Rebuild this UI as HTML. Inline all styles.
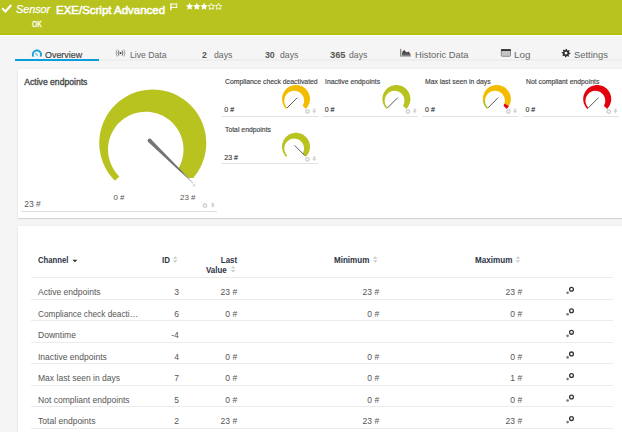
<!DOCTYPE html>
<html><head><meta charset="utf-8"><style>
html,body{margin:0;padding:0;}
body{width:622px;height:432px;overflow:hidden;position:relative;background:#f5f5f5;font-family:"Liberation Sans", sans-serif;}
</style></head><body>
<div style="position:absolute;left:0;top:0;width:622px;height:33px;background:#b9c31f"></div>
<div style="position:absolute;left:0;top:33px;width:622px;height:2px;background:#b4c012"></div>
<div style="position:absolute;left:0;top:35px;width:622px;height:1px;background:#fcfcfc"></div>
<svg style="position:absolute;left:0;top:0" width="622" height="35"><path d="M2.2,8.3 L5.5,11.5 L11.2,5" fill="none" stroke="#fff" stroke-width="2.1"/><path d="M170.9,3.3 V10.3" fill="none" stroke="#fff" stroke-width="1.3"/><path d="M171,4 H177.2 L176.2,5.8 L177.2,7.4 H171" fill="none" stroke="#fff" stroke-width="1"/><path d="M189.60,2.80 L190.72,5.06 L193.21,5.43 L191.41,7.19 L191.83,9.67 L189.60,8.50 L187.37,9.67 L187.79,7.19 L185.99,5.43 L188.48,5.06Z" fill="#fff"/><path d="M196.85,2.80 L197.97,5.06 L200.46,5.43 L198.66,7.19 L199.08,9.67 L196.85,8.50 L194.62,9.67 L195.04,7.19 L193.24,5.43 L195.73,5.06Z" fill="#fff"/><path d="M204.10,2.80 L205.22,5.06 L207.71,5.43 L205.91,7.19 L206.33,9.67 L204.10,8.50 L201.87,9.67 L202.29,7.19 L200.49,5.43 L202.98,5.06Z" fill="#fff"/><path d="M211.35,3.40 L212.32,5.37 L214.49,5.68 L212.92,7.21 L213.29,9.37 L211.35,8.35 L209.41,9.37 L209.78,7.21 L208.21,5.68 L210.38,5.37Z" fill="none" stroke="#fff" stroke-width="0.9"/><path d="M218.60,3.40 L219.57,5.37 L221.74,5.68 L220.17,7.21 L220.54,9.37 L218.60,8.35 L216.66,9.37 L217.03,7.21 L215.46,5.68 L217.63,5.37Z" fill="none" stroke="#fff" stroke-width="0.9"/></svg>
<div style="position:absolute;left:16.2px;top:4.25px;font-size:11.4px;line-height:11.4px;color:#fff;font-weight:400;font-style:italic;white-space:nowrap;transform:scaleX(0.947);transform-origin:0 0;-webkit-text-stroke:0.25px #fff;">Sensor</div>
<div style="position:absolute;left:56.4px;top:4.08px;font-size:11.6px;line-height:11.6px;color:#fff;font-weight:400;font-style:normal;white-space:nowrap;transform:scaleX(0.99);transform-origin:0 0;-webkit-text-stroke:0.55px #fff;">EXE/Script Advanced</div>
<div style="position:absolute;left:31.8px;top:20.09px;font-size:8.4px;line-height:8.4px;color:#fcfcf0;font-weight:400;font-style:normal;white-space:nowrap;transform:scaleX(0.8);transform-origin:0 0;-webkit-text-stroke:0.4px #fcfcf0;">OK</div>
<div style="position:absolute;left:15px;top:59px;width:607px;height:2px;background:#eeeeee"></div>
<div style="position:absolute;left:15px;top:59px;width:84px;height:2px;background:#0c9edb"></div>
<div style="position:absolute;left:45.3px;top:49.90px;font-size:9.8px;line-height:9.8px;color:#444;font-weight:400;font-style:normal;white-space:nowrap;transform:scaleX(0.91);transform-origin:0 0;-webkit-text-stroke:0.2px #444;">Overview</div>
<div style="position:absolute;left:129.6px;top:49.90px;font-size:9.8px;line-height:9.8px;color:#666;font-weight:400;font-style:normal;white-space:nowrap;transform:scaleX(0.88);transform-origin:0 0;">Live Data</div>
<div style="position:absolute;left:202.2px;top:49.90px;font-size:9.8px;line-height:9.8px;color:#555;font-weight:700;font-style:normal;white-space:nowrap;transform:scaleX(0.88);transform-origin:0 0;">2</div>
<div style="position:absolute;left:214.1px;top:49.90px;font-size:9.8px;line-height:9.8px;color:#666;font-weight:400;font-style:normal;white-space:nowrap;transform:scaleX(0.887);transform-origin:0 0;">days</div>
<div style="position:absolute;left:265.3px;top:49.90px;font-size:9.8px;line-height:9.8px;color:#555;font-weight:700;font-style:normal;white-space:nowrap;transform:scaleX(0.89);transform-origin:0 0;">30</div>
<div style="position:absolute;left:280.0px;top:49.90px;font-size:9.8px;line-height:9.8px;color:#666;font-weight:400;font-style:normal;white-space:nowrap;transform:scaleX(0.887);transform-origin:0 0;">days</div>
<div style="position:absolute;left:330.2px;top:49.90px;font-size:9.8px;line-height:9.8px;color:#555;font-weight:700;font-style:normal;white-space:nowrap;transform:scaleX(0.947);transform-origin:0 0;">365</div>
<div style="position:absolute;left:349.0px;top:49.90px;font-size:9.8px;line-height:9.8px;color:#666;font-weight:400;font-style:normal;white-space:nowrap;transform:scaleX(0.887);transform-origin:0 0;">days</div>
<div style="position:absolute;left:415px;top:49.90px;font-size:9.8px;line-height:9.8px;color:#666;font-weight:400;font-style:normal;white-space:nowrap;transform:scaleX(0.954);transform-origin:0 0;">Historic Data</div>
<div style="position:absolute;left:514px;top:49.90px;font-size:9.8px;line-height:9.8px;color:#666;font-weight:400;font-style:normal;white-space:nowrap;">Log</div>
<div style="position:absolute;left:574px;top:49.90px;font-size:9.8px;line-height:9.8px;color:#666;font-weight:400;font-style:normal;white-space:nowrap;transform:scaleX(0.958);transform-origin:0 0;">Settings</div>
<svg style="position:absolute;left:0;top:0" width="622" height="62"><path d="M33.4,56.6 A4.1,4.1 0 1 1 40.5,56.6" fill="none" stroke="#0c9edb" stroke-width="1.7"/><path d="M35.4,53.2 L37.7,55.6" stroke="#5ab4e2" stroke-width="1.1"/><circle cx="120.5" cy="53.1" r="1.1" fill="#444"/><path d="M118.9,50.6 Q117.3,53.1 118.9,55.6 M122.1,50.6 Q123.7,53.1 122.1,55.6" fill="none" stroke="#666" stroke-width="0.95"/><path d="M117.2,49.6 Q114.9,53.1 117.2,56.6 M123.8,49.6 Q126.1,53.1 123.8,56.6" fill="none" stroke="#999" stroke-width="0.95"/><path d="M400.8,48.9 V56.7" stroke="#666" stroke-width="1"/><defs><linearGradient id="hg" x1="0" y1="0" x2="0" y2="1"><stop offset="0" stop-color="#333"/><stop offset="0.6" stop-color="#555"/><stop offset="1" stop-color="#aaa"/></linearGradient></defs><path d="M401.6,56.7 L402.3,52 L404.2,50 L406.5,52.6 L408.4,51.4 L410.2,53.6 L411,56.7 Z" fill="url(#hg)"/><rect x="501.3" y="49.5" width="9.2" height="6.8" rx="0.8" fill="#c4c4c4" stroke="#777" stroke-width="0.8"/><rect x="501" y="49.2" width="9.8" height="1.8" fill="#333"/><path d="M570.30,53.10 L570.22,53.94 L568.96,54.32 L568.66,54.88 L569.04,56.14 L568.39,56.68 L567.22,56.06 L566.62,56.24 L566.00,57.40 L565.16,57.32 L564.78,56.06 L564.22,55.76 L562.96,56.14 L562.42,55.49 L563.04,54.32 L562.86,53.72 L561.70,53.10 L561.78,52.26 L563.04,51.88 L563.34,51.32 L562.96,50.06 L563.61,49.52 L564.78,50.14 L565.38,49.96 L566.00,48.80 L566.84,48.88 L567.22,50.14 L567.78,50.44 L569.04,50.06 L569.58,50.71 L568.96,51.88 L569.14,52.48Z M567.40,53.10 A1.4,1.4 0 1 0 564.60,53.10 A1.4,1.4 0 1 0 567.40,53.10Z" fill="#333" fill-rule="evenodd"/></svg>
<div style="position:absolute;left:18px;top:69px;width:640px;height:149px;background:#fff;box-shadow:0 1px 1px rgba(0,0,0,0.11),0 0 3px rgba(0,0,0,0.06)"></div>
<div style="position:absolute;left:24.3px;top:77.92px;font-size:8.6px;line-height:8.6px;color:#4a4a4a;font-weight:400;font-style:normal;white-space:nowrap;-webkit-text-stroke:0.35px #4a4a4a;">Active endpoints</div>
<svg style="position:absolute;left:0;top:0" width="622" height="432"><defs><clipPath id="bgc"><path d="M0,0 H622 V177.9 H170 V432 H0Z"/></clipPath></defs><g clip-path="url(#bgc)"><path d="M114.92,180.83 L112.07,177.75 L109.47,174.45 L107.13,170.95 L105.08,167.29 L103.32,163.47 L101.87,159.53 L100.73,155.49 L99.91,151.37 L99.41,147.20 L99.25,143.00 L99.41,138.80 L99.91,134.63 L100.73,130.51 L101.87,126.47 L103.32,122.53 L105.08,118.71 L107.13,115.05 L109.47,111.55 L112.07,108.25 L114.92,105.17 L118.00,102.32 L121.30,99.72 L124.80,97.38 L128.46,95.33 L132.28,93.57 L136.22,92.12 L140.26,90.98 L144.38,90.16 L148.55,89.66 L152.75,89.50 L156.95,89.66 L161.12,90.16 L165.24,90.98 L169.28,92.12 L173.22,93.57 L177.04,95.33 L180.70,97.38 L184.20,99.72 L187.50,102.32 L190.58,105.17 L193.43,108.25 L196.03,111.55 L198.37,115.05 L200.42,118.71 L202.18,122.53 L203.63,126.47 L204.77,130.51 L205.59,134.63 L206.09,138.80 L206.25,143.00 L206.09,147.20 L205.59,151.37 L204.77,155.49 L203.63,159.53 L202.18,163.47 L200.42,167.29 L198.37,170.95 L196.03,174.45 L193.43,177.75 L190.58,180.83 L178.33,168.58 L179.70,166.02 L180.84,163.41 L181.78,160.79 L182.50,158.16 L183.02,155.54 L183.34,152.94 L183.49,150.38 L183.47,147.86 L183.28,145.40 L182.94,143.00 L182.45,140.66 L181.83,138.39 L181.08,136.20 L180.21,134.08 L179.22,132.04 L178.12,130.07 L176.91,128.19 L175.60,126.39 L174.20,124.68 L172.69,123.06 L171.09,121.52 L169.40,120.08 L167.62,118.73 L165.75,117.48 L163.79,116.34 L161.75,115.31 L159.62,114.39 L157.41,113.59 L155.12,112.93 L152.75,112.40 L150.31,112.03 L147.81,111.81 L145.25,111.75 L142.64,111.88 L139.99,112.19 L137.31,112.71 L134.63,113.43 L131.95,114.37 L129.29,115.53 L126.68,116.93 L124.13,118.56 L121.68,120.42 L119.34,122.53 L117.15,124.86 L115.13,127.42 L113.32,130.19 L111.73,133.15 L110.39,136.29 L109.33,139.58 L108.57,143.00 L108.12,146.51 L108.01,150.09 L108.24,153.69 L108.81,157.28 L109.74,160.82 L111.01,164.27 L112.62,167.59 L114.55,170.75 L116.79,173.71 L119.31,176.44Z" fill="#b9c31f"/></g><defs><linearGradient id="ng" gradientUnits="userSpaceOnUse" x1="149.6" y1="140.6" x2="193.0" y2="183.0"><stop offset="0" stop-color="#777"/><stop offset="0.72" stop-color="#6f6f6f"/><stop offset="1" stop-color="#c4c4c4"/></linearGradient></defs><path d="M148.20,142.03 L192.76,183.25 L193.24,182.75 L151.00,139.17Z" fill="url(#ng)"/><circle cx="149.6" cy="140.6" r="2.0" fill="#777"/><path d="M192.6,184 L195.6,186.6 M195.6,184 L192.6,186.6" stroke="#bbb" stroke-width="0.6"/></svg>
<div style="position:absolute;left:113.4px;top:193.73px;font-size:8px;line-height:8.0px;color:#555;font-weight:400;font-style:normal;white-space:nowrap;">0 #</div>
<div style="position:absolute;left:180px;top:193.73px;font-size:8px;line-height:8.0px;color:#555;font-weight:400;font-style:normal;white-space:nowrap;">23 #</div>
<div style="position:absolute;left:24.2px;top:200.00px;font-size:8.5px;line-height:8.5px;color:#555;font-weight:400;font-style:normal;white-space:nowrap;">23 #</div>
<div style="position:absolute;left:21px;top:211px;width:196px;height:1px;background:#ddd"></div>
<div style="position:absolute;left:224.6px;top:77.97px;font-size:7px;line-height:7.0px;color:#444;font-weight:400;font-style:normal;white-space:nowrap;transform:scaleX(0.976);transform-origin:0 0;-webkit-text-stroke:0.15px #444;">Compliance check deactivated</div>
<div style="position:absolute;left:224.3px;top:105.97px;font-size:7px;line-height:7.0px;color:#444;font-weight:400;font-style:normal;white-space:nowrap;-webkit-text-stroke:0.15px #444;">0 #</div>
<div style="position:absolute;left:221.5px;top:115.6px;width:96px;height:1px;background:#e2e2e2"></div>
<div style="position:absolute;left:325.0px;top:77.97px;font-size:7px;line-height:7.0px;color:#444;font-weight:400;font-style:normal;white-space:nowrap;transform:scaleX(0.976);transform-origin:0 0;-webkit-text-stroke:0.15px #444;">Inactive endpoints</div>
<div style="position:absolute;left:324.7px;top:105.97px;font-size:7px;line-height:7.0px;color:#444;font-weight:400;font-style:normal;white-space:nowrap;-webkit-text-stroke:0.15px #444;">0 #</div>
<div style="position:absolute;left:321.9px;top:115.6px;width:96px;height:1px;background:#e2e2e2"></div>
<div style="position:absolute;left:425.40000000000003px;top:77.97px;font-size:7px;line-height:7.0px;color:#444;font-weight:400;font-style:normal;white-space:nowrap;transform:scaleX(0.976);transform-origin:0 0;-webkit-text-stroke:0.15px #444;">Max last seen in days</div>
<div style="position:absolute;left:425.1px;top:105.97px;font-size:7px;line-height:7.0px;color:#444;font-weight:400;font-style:normal;white-space:nowrap;-webkit-text-stroke:0.15px #444;">0 #</div>
<div style="position:absolute;left:422.3px;top:115.6px;width:96px;height:1px;background:#e2e2e2"></div>
<div style="position:absolute;left:525.8000000000001px;top:77.97px;font-size:7px;line-height:7.0px;color:#444;font-weight:400;font-style:normal;white-space:nowrap;transform:scaleX(0.976);transform-origin:0 0;-webkit-text-stroke:0.15px #444;">Not compliant endpoints</div>
<div style="position:absolute;left:525.5px;top:105.97px;font-size:7px;line-height:7.0px;color:#444;font-weight:400;font-style:normal;white-space:nowrap;-webkit-text-stroke:0.15px #444;">0 #</div>
<div style="position:absolute;left:522.7px;top:115.6px;width:96px;height:1px;background:#e2e2e2"></div>
<div style="position:absolute;left:224.6px;top:125.77px;font-size:7px;line-height:7.0px;color:#444;font-weight:400;font-style:normal;white-space:nowrap;transform:scaleX(0.976);transform-origin:0 0;-webkit-text-stroke:0.15px #444;">Total endpoints</div>
<div style="position:absolute;left:224.3px;top:153.77px;font-size:7px;line-height:7.0px;color:#444;font-weight:400;font-style:normal;white-space:nowrap;-webkit-text-stroke:0.15px #444;">23 #</div>
<div style="position:absolute;left:221.5px;top:163.4px;width:96px;height:1px;background:#e2e2e2"></div>
<svg style="position:absolute;left:0;top:0" width="622" height="432"><path d="M207.69,205.76 L207.58,206.28 L206.76,206.44 L206.55,206.77 L206.71,207.59 L206.27,207.88 L205.58,207.41 L205.20,207.49 L204.74,208.19 L204.22,208.08 L204.06,207.26 L203.73,207.05 L202.91,207.21 L202.62,206.77 L203.09,206.08 L203.01,205.70 L202.31,205.24 L202.42,204.72 L203.24,204.56 L203.45,204.23 L203.29,203.41 L203.73,203.12 L204.42,203.59 L204.80,203.51 L205.26,202.81 L205.78,202.92 L205.94,203.74 L206.27,203.95 L207.09,203.79 L207.38,204.23 L206.91,204.92 L206.99,205.30Z M206.00,205.50 A1.0,1.0 0 1 0 204.00,205.50 A1.0,1.0 0 1 0 206.00,205.50Z" fill="#cfcfcf" fill-rule="evenodd"/><path d="M211.4,203.5 H214.20000000000002 M212.8,203.5 V207.6 M211.0,205.8 H214.60000000000002" stroke="#d0d0d0" stroke-width="0.9"/><rect x="211.9" y="203.5" width="1.8" height="2.3" fill="#d0d0d0"/><path d="M286.10,108.90 L285.35,108.09 L284.67,107.23 L284.06,106.31 L283.53,105.36 L283.07,104.36 L282.69,103.33 L282.39,102.27 L282.17,101.19 L282.04,100.10 L282.00,99.00 L282.04,97.90 L282.17,96.81 L282.39,95.73 L282.69,94.67 L283.07,93.64 L283.53,92.64 L284.06,91.69 L284.67,90.77 L285.35,89.91 L286.10,89.10 L286.91,88.35 L287.77,87.67 L288.69,87.06 L289.64,86.53 L290.64,86.07 L291.67,85.69 L292.73,85.39 L293.81,85.17 L294.90,85.04 L296.00,85.00 L297.10,85.04 L298.19,85.17 L299.27,85.39 L300.33,85.69 L301.36,86.07 L302.36,86.53 L303.31,87.06 L304.23,87.67 L305.09,88.35 L305.90,89.10 L306.65,89.91 L307.33,90.77 L307.94,91.69 L308.47,92.64 L308.93,93.64 L309.31,94.67 L309.61,95.73 L309.83,96.81 L309.96,97.90 L310.00,99.00 L309.96,100.10 L309.83,101.19 L309.61,102.27 L309.31,103.33 L308.93,104.36 L308.47,105.36 L307.94,106.31 L307.33,107.23 L306.65,108.09 L305.90,108.90 L302.69,105.69 L303.05,105.02 L303.35,104.34 L303.60,103.65 L303.78,102.97 L303.92,102.28 L304.01,101.60 L304.04,100.93 L304.04,100.27 L303.99,99.63 L303.90,99.00 L303.77,98.39 L303.61,97.79 L303.41,97.22 L303.19,96.67 L302.93,96.13 L302.64,95.62 L302.32,95.13 L301.98,94.65 L301.61,94.21 L301.22,93.78 L300.80,93.38 L300.36,93.00 L299.89,92.65 L299.40,92.32 L298.89,92.02 L298.35,91.75 L297.80,91.51 L297.22,91.31 L296.62,91.13 L296.00,90.99 L295.36,90.89 L294.71,90.84 L294.04,90.82 L293.35,90.86 L292.66,90.94 L291.96,91.07 L291.26,91.26 L290.56,91.51 L289.86,91.81 L289.18,92.18 L288.51,92.60 L287.87,93.09 L287.26,93.64 L286.68,94.25 L286.16,94.92 L285.68,95.65 L285.26,96.42 L284.91,97.24 L284.64,98.11 L284.44,99.00 L284.32,99.92 L284.29,100.85 L284.35,101.80 L284.50,102.74 L284.74,103.66 L285.08,104.57 L285.50,105.44 L286.00,106.26 L286.59,107.04 L287.25,107.75Z" fill="#f2bd00"/><line x1="297.34" y1="97.66" x2="287.09" y2="107.91" stroke="#5a5a5a" stroke-width="1.0"/><path d="M310.19,111.76 L310.08,112.28 L309.26,112.44 L309.05,112.77 L309.21,113.59 L308.77,113.88 L308.08,113.41 L307.70,113.49 L307.24,114.19 L306.72,114.08 L306.56,113.26 L306.23,113.05 L305.41,113.21 L305.12,112.77 L305.59,112.08 L305.51,111.70 L304.81,111.24 L304.92,110.72 L305.74,110.56 L305.95,110.23 L305.79,109.41 L306.23,109.12 L306.92,109.59 L307.30,109.51 L307.76,108.81 L308.28,108.92 L308.44,109.74 L308.77,109.95 L309.59,109.79 L309.88,110.23 L309.41,110.92 L309.49,111.30Z M308.50,111.50 A1.0,1.0 0 1 0 306.50,111.50 A1.0,1.0 0 1 0 308.50,111.50Z" fill="#cfcfcf" fill-rule="evenodd"/><path d="M312.90000000000003,109.3 H315.7 M314.3,109.3 V113.39999999999999 M312.5,111.6 H316.1" stroke="#d0d0d0" stroke-width="0.9"/><rect x="313.40000000000003" y="109.3" width="1.8" height="2.3" fill="#d0d0d0"/><path d="M386.50,108.90 L385.75,108.09 L385.07,107.23 L384.46,106.31 L383.93,105.36 L383.47,104.36 L383.09,103.33 L382.79,102.27 L382.57,101.19 L382.44,100.10 L382.40,99.00 L382.44,97.90 L382.57,96.81 L382.79,95.73 L383.09,94.67 L383.47,93.64 L383.93,92.64 L384.46,91.69 L385.07,90.77 L385.75,89.91 L386.50,89.10 L387.31,88.35 L388.17,87.67 L389.09,87.06 L390.04,86.53 L391.04,86.07 L392.07,85.69 L393.13,85.39 L394.21,85.17 L395.30,85.04 L396.40,85.00 L397.50,85.04 L398.59,85.17 L399.67,85.39 L400.73,85.69 L401.76,86.07 L402.76,86.53 L403.71,87.06 L404.63,87.67 L405.49,88.35 L406.30,89.10 L407.05,89.91 L407.73,90.77 L408.34,91.69 L408.87,92.64 L409.33,93.64 L409.71,94.67 L410.01,95.73 L410.23,96.81 L410.36,97.90 L410.40,99.00 L410.36,100.10 L410.23,101.19 L410.01,102.27 L409.71,103.33 L409.33,104.36 L408.87,105.36 L408.34,106.31 L407.73,107.23 L407.05,108.09 L406.30,108.90 L403.09,105.69 L403.45,105.02 L403.75,104.34 L404.00,103.65 L404.18,102.97 L404.32,102.28 L404.41,101.60 L404.44,100.93 L404.44,100.27 L404.39,99.63 L404.30,99.00 L404.17,98.39 L404.01,97.79 L403.81,97.22 L403.59,96.67 L403.33,96.13 L403.04,95.62 L402.72,95.13 L402.38,94.65 L402.01,94.21 L401.62,93.78 L401.20,93.38 L400.76,93.00 L400.29,92.65 L399.80,92.32 L399.29,92.02 L398.75,91.75 L398.20,91.51 L397.62,91.31 L397.02,91.13 L396.40,90.99 L395.76,90.89 L395.11,90.84 L394.44,90.82 L393.75,90.86 L393.06,90.94 L392.36,91.07 L391.66,91.26 L390.96,91.51 L390.26,91.81 L389.58,92.18 L388.91,92.60 L388.27,93.09 L387.66,93.64 L387.08,94.25 L386.56,94.92 L386.08,95.65 L385.66,96.42 L385.31,97.24 L385.04,98.11 L384.84,99.00 L384.72,99.92 L384.69,100.85 L384.75,101.80 L384.90,102.74 L385.14,103.66 L385.48,104.57 L385.90,105.44 L386.40,106.26 L386.99,107.04 L387.65,107.75Z" fill="#b9c31f"/><line x1="397.74" y1="97.66" x2="387.49" y2="107.91" stroke="#5a5a5a" stroke-width="1.0"/><path d="M410.59,111.76 L410.48,112.28 L409.66,112.44 L409.45,112.77 L409.61,113.59 L409.17,113.88 L408.48,113.41 L408.10,113.49 L407.64,114.19 L407.12,114.08 L406.96,113.26 L406.63,113.05 L405.81,113.21 L405.52,112.77 L405.99,112.08 L405.91,111.70 L405.21,111.24 L405.32,110.72 L406.14,110.56 L406.35,110.23 L406.19,109.41 L406.63,109.12 L407.32,109.59 L407.70,109.51 L408.16,108.81 L408.68,108.92 L408.84,109.74 L409.17,109.95 L409.99,109.79 L410.28,110.23 L409.81,110.92 L409.89,111.30Z M408.90,111.50 A1.0,1.0 0 1 0 406.90,111.50 A1.0,1.0 0 1 0 408.90,111.50Z" fill="#cfcfcf" fill-rule="evenodd"/><path d="M413.3,109.3 H416.09999999999997 M414.7,109.3 V113.39999999999999 M412.9,111.6 H416.5" stroke="#d0d0d0" stroke-width="0.9"/><rect x="413.8" y="109.3" width="1.8" height="2.3" fill="#d0d0d0"/><path d="M486.90,108.90 L486.78,108.77 L486.66,108.65 L486.54,108.52 L486.42,108.39 L486.30,108.26 L486.19,108.13 L486.07,108.00 L485.96,107.86 L485.85,107.72 L485.74,107.59 L485.64,107.45 L485.53,107.31 L485.43,107.17 L485.33,107.02 L485.23,106.88 L485.13,106.73 L485.03,106.59 L484.94,106.44 L484.85,106.29 L484.76,106.14 L484.67,105.99 L484.58,105.84 L484.50,105.68 L484.42,105.53 L484.34,105.37 L484.26,105.22 L484.18,105.06 L484.10,104.90 L484.03,104.74 L483.96,104.58 L483.89,104.42 L483.83,104.26 L483.76,104.10 L483.70,103.93 L483.64,103.77 L483.58,103.60 L483.52,103.44 L483.47,103.27 L483.42,103.10 L483.37,102.94 L483.32,102.77 L483.27,102.60 L483.23,102.43 L483.18,102.26 L483.15,102.09 L483.11,101.92 L483.07,101.75 L483.04,101.58 L483.01,101.40 L482.98,101.23 L482.95,101.06 L482.93,100.88 L482.90,100.71 L482.88,100.54 L482.87,100.36 L482.85,100.19 L482.84,100.01 L482.83,99.84 L482.82,99.66 L482.81,99.49 L485.18,99.41 L485.16,99.55 L485.14,99.70 L485.13,99.85 L485.12,99.99 L485.11,100.14 L485.10,100.29 L485.09,100.44 L485.09,100.59 L485.09,100.74 L485.09,100.89 L485.10,101.04 L485.10,101.19 L485.11,101.34 L485.12,101.49 L485.14,101.64 L485.15,101.79 L485.17,101.94 L485.19,102.09 L485.21,102.24 L485.24,102.39 L485.26,102.54 L485.29,102.69 L485.32,102.84 L485.36,102.98 L485.39,103.13 L485.43,103.28 L485.47,103.43 L485.52,103.57 L485.56,103.72 L485.61,103.87 L485.66,104.01 L485.71,104.15 L485.77,104.30 L485.83,104.44 L485.88,104.58 L485.95,104.72 L486.01,104.86 L486.08,105.00 L486.14,105.14 L486.21,105.28 L486.29,105.41 L486.36,105.55 L486.44,105.68 L486.52,105.81 L486.60,105.95 L486.68,106.08 L486.77,106.21 L486.85,106.33 L486.94,106.46 L487.03,106.58 L487.13,106.71 L487.22,106.83 L487.32,106.95 L487.42,107.07 L487.52,107.19 L487.62,107.30 L487.73,107.42 L487.83,107.53 L487.94,107.64 L488.05,107.75Z" fill="#b9c31f"/><path d="M482.81,99.49 L482.81,98.63 L482.85,97.76 L482.96,96.91 L483.11,96.06 L483.32,95.22 L483.58,94.40 L483.89,93.59 L484.25,92.80 L484.65,92.04 L485.10,91.31 L485.60,90.60 L486.14,89.93 L486.72,89.29 L487.34,88.68 L487.99,88.12 L488.68,87.60 L489.39,87.12 L490.14,86.68 L490.91,86.30 L491.71,85.96 L492.52,85.67 L493.35,85.43 L494.19,85.24 L495.05,85.11 L495.90,85.03 L496.77,85.00 L497.63,85.02 L498.49,85.10 L499.34,85.23 L500.19,85.42 L501.02,85.65 L501.83,85.94 L502.63,86.27 L503.40,86.65 L504.15,87.08 L504.87,87.56 L505.56,88.08 L506.22,88.64 L506.84,89.24 L507.42,89.88 L507.96,90.55 L508.46,91.25 L508.92,91.99 L509.33,92.75 L509.69,93.53 L510.00,94.33 L510.26,95.16 L510.47,95.99 L510.63,96.84 L510.74,97.70 L510.79,98.56 L510.79,99.42 L510.74,100.29 L510.64,101.14 L510.48,101.99 L510.27,102.83 L510.01,103.65 L509.69,104.46 L509.33,105.24 L508.92,106.00 L504.46,103.42 L504.60,102.88 L504.71,102.35 L504.78,101.81 L504.83,101.28 L504.85,100.76 L504.84,100.24 L504.80,99.74 L504.74,99.24 L504.65,98.75 L504.55,98.28 L504.42,97.81 L504.26,97.36 L504.09,96.92 L503.90,96.49 L503.70,96.07 L503.47,95.67 L503.23,95.28 L502.97,94.90 L502.69,94.54 L502.40,94.19 L502.09,93.86 L501.77,93.53 L501.43,93.23 L501.08,92.94 L500.71,92.66 L500.33,92.40 L499.93,92.16 L499.52,91.93 L499.10,91.73 L498.66,91.54 L498.21,91.37 L497.75,91.22 L497.27,91.09 L496.78,90.99 L496.28,90.91 L495.77,90.86 L495.25,90.83 L494.72,90.83 L494.18,90.85 L493.64,90.91 L493.09,91.00 L492.54,91.13 L491.99,91.28 L491.44,91.47 L490.89,91.70 L490.35,91.97 L489.82,92.27 L489.30,92.61 L488.79,92.99 L488.30,93.41 L487.84,93.87 L487.40,94.36 L486.98,94.89 L486.60,95.45 L486.26,96.04 L485.95,96.67 L485.69,97.32 L485.47,98.00 L485.30,98.69 L485.18,99.41Z" fill="#f2bd00"/><path d="M508.92,106.00 L508.89,106.05 L508.86,106.11 L508.83,106.16 L508.80,106.21 L508.77,106.26 L508.74,106.31 L508.70,106.37 L508.67,106.42 L508.64,106.47 L508.61,106.52 L508.57,106.57 L508.54,106.62 L508.51,106.68 L508.47,106.73 L508.44,106.78 L508.41,106.83 L508.37,106.88 L508.34,106.93 L508.30,106.98 L508.27,107.03 L508.23,107.08 L508.20,107.13 L508.16,107.18 L508.13,107.23 L508.09,107.28 L508.05,107.33 L508.02,107.38 L507.98,107.43 L507.94,107.47 L507.91,107.52 L507.87,107.57 L507.83,107.62 L507.79,107.67 L507.76,107.72 L507.72,107.76 L507.68,107.81 L507.64,107.86 L507.60,107.91 L507.56,107.95 L507.52,108.00 L507.49,108.05 L507.45,108.09 L507.41,108.14 L507.37,108.18 L507.33,108.23 L507.29,108.28 L507.24,108.32 L507.20,108.37 L507.16,108.41 L507.12,108.46 L507.08,108.50 L507.04,108.55 L507.00,108.59 L506.96,108.64 L506.91,108.68 L506.87,108.73 L506.83,108.77 L506.79,108.81 L506.74,108.86 L506.70,108.90 L503.49,105.69 L503.51,105.66 L503.54,105.62 L503.56,105.58 L503.58,105.55 L503.60,105.51 L503.62,105.47 L503.64,105.43 L503.66,105.40 L503.68,105.36 L503.70,105.32 L503.72,105.28 L503.74,105.25 L503.76,105.21 L503.78,105.17 L503.80,105.14 L503.81,105.10 L503.83,105.06 L503.85,105.02 L503.87,104.99 L503.89,104.95 L503.91,104.91 L503.92,104.87 L503.94,104.83 L503.96,104.80 L503.98,104.76 L503.99,104.72 L504.01,104.68 L504.03,104.65 L504.04,104.61 L504.06,104.57 L504.07,104.53 L504.09,104.49 L504.11,104.46 L504.12,104.42 L504.14,104.38 L504.15,104.34 L504.17,104.30 L504.18,104.27 L504.20,104.23 L504.21,104.19 L504.23,104.15 L504.24,104.11 L504.25,104.07 L504.27,104.04 L504.28,104.00 L504.29,103.96 L504.31,103.92 L504.32,103.88 L504.33,103.85 L504.35,103.81 L504.36,103.77 L504.37,103.73 L504.38,103.69 L504.40,103.65 L504.41,103.62 L504.42,103.58 L504.43,103.54 L504.44,103.50 L504.45,103.46 L504.46,103.42Z" fill="#e3000f"/><line x1="498.14" y1="97.66" x2="487.89" y2="107.91" stroke="#5a5a5a" stroke-width="1.0"/><path d="M510.99,111.76 L510.88,112.28 L510.06,112.44 L509.85,112.77 L510.01,113.59 L509.57,113.88 L508.88,113.41 L508.50,113.49 L508.04,114.19 L507.52,114.08 L507.36,113.26 L507.03,113.05 L506.21,113.21 L505.92,112.77 L506.39,112.08 L506.31,111.70 L505.61,111.24 L505.72,110.72 L506.54,110.56 L506.75,110.23 L506.59,109.41 L507.03,109.12 L507.72,109.59 L508.10,109.51 L508.56,108.81 L509.08,108.92 L509.24,109.74 L509.57,109.95 L510.39,109.79 L510.68,110.23 L510.21,110.92 L510.29,111.30Z M509.30,111.50 A1.0,1.0 0 1 0 507.30,111.50 A1.0,1.0 0 1 0 509.30,111.50Z" fill="#cfcfcf" fill-rule="evenodd"/><path d="M513.7,109.3 H516.5 M515.1,109.3 V113.39999999999999 M513.3000000000001,111.6 H516.9" stroke="#d0d0d0" stroke-width="0.9"/><rect x="514.2" y="109.3" width="1.8" height="2.3" fill="#d0d0d0"/><path d="M587.30,108.90 L586.55,108.09 L585.87,107.23 L585.26,106.31 L584.73,105.36 L584.27,104.36 L583.89,103.33 L583.59,102.27 L583.37,101.19 L583.24,100.10 L583.20,99.00 L583.24,97.90 L583.37,96.81 L583.59,95.73 L583.89,94.67 L584.27,93.64 L584.73,92.64 L585.26,91.69 L585.87,90.77 L586.55,89.91 L587.30,89.10 L588.11,88.35 L588.97,87.67 L589.89,87.06 L590.84,86.53 L591.84,86.07 L592.87,85.69 L593.93,85.39 L595.01,85.17 L596.10,85.04 L597.20,85.00 L598.30,85.04 L599.39,85.17 L600.47,85.39 L601.53,85.69 L602.56,86.07 L603.56,86.53 L604.51,87.06 L605.43,87.67 L606.29,88.35 L607.10,89.10 L607.85,89.91 L608.53,90.77 L609.14,91.69 L609.67,92.64 L610.13,93.64 L610.51,94.67 L610.81,95.73 L611.03,96.81 L611.16,97.90 L611.20,99.00 L611.16,100.10 L611.03,101.19 L610.81,102.27 L610.51,103.33 L610.13,104.36 L609.67,105.36 L609.14,106.31 L608.53,107.23 L607.85,108.09 L607.10,108.90 L603.89,105.69 L604.25,105.02 L604.55,104.34 L604.80,103.65 L604.98,102.97 L605.12,102.28 L605.21,101.60 L605.24,100.93 L605.24,100.27 L605.19,99.63 L605.10,99.00 L604.97,98.39 L604.81,97.79 L604.61,97.22 L604.39,96.67 L604.13,96.13 L603.84,95.62 L603.52,95.13 L603.18,94.65 L602.81,94.21 L602.42,93.78 L602.00,93.38 L601.56,93.00 L601.09,92.65 L600.60,92.32 L600.09,92.02 L599.55,91.75 L599.00,91.51 L598.42,91.31 L597.82,91.13 L597.20,90.99 L596.56,90.89 L595.91,90.84 L595.24,90.82 L594.55,90.86 L593.86,90.94 L593.16,91.07 L592.46,91.26 L591.76,91.51 L591.06,91.81 L590.38,92.18 L589.71,92.60 L589.07,93.09 L588.46,93.64 L587.88,94.25 L587.36,94.92 L586.88,95.65 L586.46,96.42 L586.11,97.24 L585.84,98.11 L585.64,99.00 L585.52,99.92 L585.49,100.85 L585.55,101.80 L585.70,102.74 L585.94,103.66 L586.28,104.57 L586.70,105.44 L587.20,106.26 L587.79,107.04 L588.45,107.75Z" fill="#e3000f"/><line x1="598.54" y1="97.66" x2="588.29" y2="107.91" stroke="#5a5a5a" stroke-width="1.0"/><path d="M611.39,111.76 L611.28,112.28 L610.46,112.44 L610.25,112.77 L610.41,113.59 L609.97,113.88 L609.28,113.41 L608.90,113.49 L608.44,114.19 L607.92,114.08 L607.76,113.26 L607.43,113.05 L606.61,113.21 L606.32,112.77 L606.79,112.08 L606.71,111.70 L606.01,111.24 L606.12,110.72 L606.94,110.56 L607.15,110.23 L606.99,109.41 L607.43,109.12 L608.12,109.59 L608.50,109.51 L608.96,108.81 L609.48,108.92 L609.64,109.74 L609.97,109.95 L610.79,109.79 L611.08,110.23 L610.61,110.92 L610.69,111.30Z M609.70,111.50 A1.0,1.0 0 1 0 607.70,111.50 A1.0,1.0 0 1 0 609.70,111.50Z" fill="#cfcfcf" fill-rule="evenodd"/><path d="M614.1,109.3 H616.9 M615.5,109.3 V113.39999999999999 M613.7,111.6 H617.3" stroke="#d0d0d0" stroke-width="0.9"/><rect x="614.6" y="109.3" width="1.8" height="2.3" fill="#d0d0d0"/><path d="M286.10,156.70 L285.35,155.89 L284.67,155.03 L284.06,154.11 L283.53,153.16 L283.07,152.16 L282.69,151.13 L282.39,150.07 L282.17,148.99 L282.04,147.90 L282.00,146.80 L282.04,145.70 L282.17,144.61 L282.39,143.53 L282.69,142.47 L283.07,141.44 L283.53,140.44 L284.06,139.49 L284.67,138.57 L285.35,137.71 L286.10,136.90 L286.91,136.15 L287.77,135.47 L288.69,134.86 L289.64,134.33 L290.64,133.87 L291.67,133.49 L292.73,133.19 L293.81,132.97 L294.90,132.84 L296.00,132.80 L297.10,132.84 L298.19,132.97 L299.27,133.19 L300.33,133.49 L301.36,133.87 L302.36,134.33 L303.31,134.86 L304.23,135.47 L305.09,136.15 L305.90,136.90 L306.65,137.71 L307.33,138.57 L307.94,139.49 L308.47,140.44 L308.93,141.44 L309.31,142.47 L309.61,143.53 L309.83,144.61 L309.96,145.70 L310.00,146.80 L309.96,147.90 L309.83,148.99 L309.61,150.07 L309.31,151.13 L308.93,152.16 L308.47,153.16 L307.94,154.11 L307.33,155.03 L306.65,155.89 L305.90,156.70 L302.69,153.49 L303.05,152.82 L303.35,152.14 L303.60,151.45 L303.78,150.77 L303.92,150.08 L304.01,149.40 L304.04,148.73 L304.04,148.07 L303.99,147.43 L303.90,146.80 L303.77,146.19 L303.61,145.59 L303.41,145.02 L303.19,144.47 L302.93,143.93 L302.64,143.42 L302.32,142.93 L301.98,142.45 L301.61,142.01 L301.22,141.58 L300.80,141.18 L300.36,140.80 L299.89,140.45 L299.40,140.12 L298.89,139.82 L298.35,139.55 L297.80,139.31 L297.22,139.11 L296.62,138.93 L296.00,138.79 L295.36,138.69 L294.71,138.64 L294.04,138.62 L293.35,138.66 L292.66,138.74 L291.96,138.87 L291.26,139.06 L290.56,139.31 L289.86,139.61 L289.18,139.98 L288.51,140.40 L287.87,140.89 L287.26,141.44 L286.68,142.05 L286.16,142.72 L285.68,143.45 L285.26,144.22 L284.91,145.04 L284.64,145.91 L284.44,146.80 L284.32,147.72 L284.29,148.65 L284.35,149.60 L284.50,150.54 L284.74,151.46 L285.08,152.37 L285.50,153.24 L286.00,154.06 L286.59,154.84 L287.25,155.55Z" fill="#b9c31f"/><line x1="294.66" y1="145.46" x2="304.91" y2="155.71" stroke="#5a5a5a" stroke-width="1.0"/><path d="M310.19,159.56 L310.08,160.08 L309.26,160.24 L309.05,160.57 L309.21,161.39 L308.77,161.68 L308.08,161.21 L307.70,161.29 L307.24,161.99 L306.72,161.88 L306.56,161.06 L306.23,160.85 L305.41,161.01 L305.12,160.57 L305.59,159.88 L305.51,159.50 L304.81,159.04 L304.92,158.52 L305.74,158.36 L305.95,158.03 L305.79,157.21 L306.23,156.92 L306.92,157.39 L307.30,157.31 L307.76,156.61 L308.28,156.72 L308.44,157.54 L308.77,157.75 L309.59,157.59 L309.88,158.03 L309.41,158.72 L309.49,159.10Z M308.50,159.30 A1.0,1.0 0 1 0 306.50,159.30 A1.0,1.0 0 1 0 308.50,159.30Z" fill="#cfcfcf" fill-rule="evenodd"/><path d="M312.90000000000003,157.1 H315.7 M314.3,157.1 V161.2 M312.5,159.4 H316.1" stroke="#d0d0d0" stroke-width="0.9"/><rect x="313.40000000000003" y="157.1" width="1.8" height="2.3" fill="#d0d0d0"/></svg>
<div style="position:absolute;left:18px;top:226px;width:640px;height:260px;background:#fff;box-shadow:0 1px 1px rgba(0,0,0,0.11),0 0 3px rgba(0,0,0,0.06)"></div>
<div style="position:absolute;left:37.7px;top:255.75px;font-size:8.8px;line-height:8.8px;color:#2b3344;font-weight:700;font-style:normal;white-space:nowrap;transform:scaleX(0.875);transform-origin:0 0;">Channel</div>
<div style="position:absolute;left:161.6px;top:255.85px;font-size:8.8px;line-height:8.8px;color:#2b3344;font-weight:700;font-style:normal;white-space:nowrap;transform:scaleX(0.9);transform-origin:0 0;">ID</div>
<div style="position:absolute;right:385.1px;top:255.85px;font-size:8.8px;line-height:8.8px;color:#2b3344;font-weight:700;white-space:nowrap;text-align:right;transform:scaleX(0.9);transform-origin:100% 0;">Last</div>
<div style="position:absolute;left:206.3px;top:265.85px;font-size:8.8px;line-height:8.8px;color:#2b3344;font-weight:700;font-style:normal;white-space:nowrap;transform:scaleX(0.9);transform-origin:0 0;">Value</div>
<div style="position:absolute;left:333.7px;top:255.85px;font-size:8.8px;line-height:8.8px;color:#2b3344;font-weight:700;font-style:normal;white-space:nowrap;transform:scaleX(0.915);transform-origin:0 0;">Minimum</div>
<div style="position:absolute;left:474.5px;top:255.85px;font-size:8.8px;line-height:8.8px;color:#2b3344;font-weight:700;font-style:normal;white-space:nowrap;transform:scaleX(0.92);transform-origin:0 0;">Maximum</div>
<div style="position:absolute;left:30.7px;top:277.0px;width:582.5px;height:1px;background:#ebebeb"></div>
<div style="position:absolute;left:30.7px;top:298.6px;width:582.5px;height:1px;background:#ebebeb"></div>
<div style="position:absolute;left:30.7px;top:320.1px;width:582.5px;height:1px;background:#ebebeb"></div>
<div style="position:absolute;left:30.7px;top:341.7px;width:582.5px;height:1px;background:#ebebeb"></div>
<div style="position:absolute;left:30.7px;top:363.3px;width:582.5px;height:1px;background:#ebebeb"></div>
<div style="position:absolute;left:30.7px;top:384.9px;width:582.5px;height:1px;background:#ebebeb"></div>
<div style="position:absolute;left:30.7px;top:406.4px;width:582.5px;height:1px;background:#ebebeb"></div>
<div style="position:absolute;left:30.7px;top:428.0px;width:582.5px;height:1px;background:#ebebeb"></div>
<div style="position:absolute;left:37.7px;top:287.95px;font-size:8.8px;line-height:8.8px;color:#555;font-weight:400;font-style:normal;white-space:nowrap;transform:scaleX(0.97);transform-origin:0 0;">Active endpoints</div>
<div style="position:absolute;right:442.7px;top:287.95px;font-size:8.8px;line-height:8.8px;color:#555;font-weight:400;white-space:nowrap;text-align:right;transform:scaleX(0.97);transform-origin:100% 0;">3</div>
<div style="position:absolute;right:384.4px;top:287.95px;font-size:8.8px;line-height:8.8px;color:#555;font-weight:400;white-space:nowrap;text-align:right;transform:scaleX(0.97);transform-origin:100% 0;">23 #</div>
<div style="position:absolute;right:242.60000000000002px;top:287.95px;font-size:8.8px;line-height:8.8px;color:#555;font-weight:400;white-space:nowrap;text-align:right;transform:scaleX(0.97);transform-origin:100% 0;">23 #</div>
<div style="position:absolute;right:100.20000000000005px;top:287.95px;font-size:8.8px;line-height:8.8px;color:#555;font-weight:400;white-space:nowrap;text-align:right;transform:scaleX(0.97);transform-origin:100% 0;">23 #</div>
<div style="position:absolute;left:37.7px;top:309.52px;font-size:8.8px;line-height:8.8px;color:#555;font-weight:400;font-style:normal;white-space:nowrap;transform:scaleX(0.937);transform-origin:0 0;">Compliance check deacti…</div>
<div style="position:absolute;right:442.7px;top:309.52px;font-size:8.8px;line-height:8.8px;color:#555;font-weight:400;white-space:nowrap;text-align:right;transform:scaleX(0.97);transform-origin:100% 0;">6</div>
<div style="position:absolute;right:384.4px;top:309.52px;font-size:8.8px;line-height:8.8px;color:#555;font-weight:400;white-space:nowrap;text-align:right;transform:scaleX(0.97);transform-origin:100% 0;">0 #</div>
<div style="position:absolute;right:242.60000000000002px;top:309.52px;font-size:8.8px;line-height:8.8px;color:#555;font-weight:400;white-space:nowrap;text-align:right;transform:scaleX(0.97);transform-origin:100% 0;">0 #</div>
<div style="position:absolute;right:100.20000000000005px;top:309.52px;font-size:8.8px;line-height:8.8px;color:#555;font-weight:400;white-space:nowrap;text-align:right;transform:scaleX(0.97);transform-origin:100% 0;">0 #</div>
<div style="position:absolute;left:37.7px;top:331.09px;font-size:8.8px;line-height:8.8px;color:#555;font-weight:400;font-style:normal;white-space:nowrap;transform:scaleX(0.97);transform-origin:0 0;">Downtime</div>
<div style="position:absolute;right:442.7px;top:331.09px;font-size:8.8px;line-height:8.8px;color:#555;font-weight:400;white-space:nowrap;text-align:right;transform:scaleX(0.97);transform-origin:100% 0;">-4</div>
<div style="position:absolute;left:37.7px;top:352.66px;font-size:8.8px;line-height:8.8px;color:#555;font-weight:400;font-style:normal;white-space:nowrap;transform:scaleX(0.97);transform-origin:0 0;">Inactive endpoints</div>
<div style="position:absolute;right:442.7px;top:352.66px;font-size:8.8px;line-height:8.8px;color:#555;font-weight:400;white-space:nowrap;text-align:right;transform:scaleX(0.97);transform-origin:100% 0;">4</div>
<div style="position:absolute;right:384.4px;top:352.66px;font-size:8.8px;line-height:8.8px;color:#555;font-weight:400;white-space:nowrap;text-align:right;transform:scaleX(0.97);transform-origin:100% 0;">0 #</div>
<div style="position:absolute;right:242.60000000000002px;top:352.66px;font-size:8.8px;line-height:8.8px;color:#555;font-weight:400;white-space:nowrap;text-align:right;transform:scaleX(0.97);transform-origin:100% 0;">0 #</div>
<div style="position:absolute;right:100.20000000000005px;top:352.66px;font-size:8.8px;line-height:8.8px;color:#555;font-weight:400;white-space:nowrap;text-align:right;transform:scaleX(0.97);transform-origin:100% 0;">0 #</div>
<div style="position:absolute;left:37.7px;top:374.23px;font-size:8.8px;line-height:8.8px;color:#555;font-weight:400;font-style:normal;white-space:nowrap;transform:scaleX(0.97);transform-origin:0 0;">Max last seen in days</div>
<div style="position:absolute;right:442.7px;top:374.23px;font-size:8.8px;line-height:8.8px;color:#555;font-weight:400;white-space:nowrap;text-align:right;transform:scaleX(0.97);transform-origin:100% 0;">7</div>
<div style="position:absolute;right:384.4px;top:374.23px;font-size:8.8px;line-height:8.8px;color:#555;font-weight:400;white-space:nowrap;text-align:right;transform:scaleX(0.97);transform-origin:100% 0;">0 #</div>
<div style="position:absolute;right:242.60000000000002px;top:374.23px;font-size:8.8px;line-height:8.8px;color:#555;font-weight:400;white-space:nowrap;text-align:right;transform:scaleX(0.97);transform-origin:100% 0;">0 #</div>
<div style="position:absolute;right:100.20000000000005px;top:374.23px;font-size:8.8px;line-height:8.8px;color:#555;font-weight:400;white-space:nowrap;text-align:right;transform:scaleX(0.97);transform-origin:100% 0;">1 #</div>
<div style="position:absolute;left:37.7px;top:395.80px;font-size:8.8px;line-height:8.8px;color:#555;font-weight:400;font-style:normal;white-space:nowrap;transform:scaleX(0.97);transform-origin:0 0;">Not compliant endpoints</div>
<div style="position:absolute;right:442.7px;top:395.80px;font-size:8.8px;line-height:8.8px;color:#555;font-weight:400;white-space:nowrap;text-align:right;transform:scaleX(0.97);transform-origin:100% 0;">5</div>
<div style="position:absolute;right:384.4px;top:395.80px;font-size:8.8px;line-height:8.8px;color:#555;font-weight:400;white-space:nowrap;text-align:right;transform:scaleX(0.97);transform-origin:100% 0;">0 #</div>
<div style="position:absolute;right:242.60000000000002px;top:395.80px;font-size:8.8px;line-height:8.8px;color:#555;font-weight:400;white-space:nowrap;text-align:right;transform:scaleX(0.97);transform-origin:100% 0;">0 #</div>
<div style="position:absolute;right:100.20000000000005px;top:395.80px;font-size:8.8px;line-height:8.8px;color:#555;font-weight:400;white-space:nowrap;text-align:right;transform:scaleX(0.97);transform-origin:100% 0;">0 #</div>
<div style="position:absolute;left:37.7px;top:417.37px;font-size:8.8px;line-height:8.8px;color:#555;font-weight:400;font-style:normal;white-space:nowrap;transform:scaleX(0.97);transform-origin:0 0;">Total endpoints</div>
<div style="position:absolute;right:442.7px;top:417.37px;font-size:8.8px;line-height:8.8px;color:#555;font-weight:400;white-space:nowrap;text-align:right;transform:scaleX(0.97);transform-origin:100% 0;">2</div>
<div style="position:absolute;right:384.4px;top:417.37px;font-size:8.8px;line-height:8.8px;color:#555;font-weight:400;white-space:nowrap;text-align:right;transform:scaleX(0.97);transform-origin:100% 0;">23 #</div>
<div style="position:absolute;right:242.60000000000002px;top:417.37px;font-size:8.8px;line-height:8.8px;color:#555;font-weight:400;white-space:nowrap;text-align:right;transform:scaleX(0.97);transform-origin:100% 0;">23 #</div>
<div style="position:absolute;right:100.20000000000005px;top:417.37px;font-size:8.8px;line-height:8.8px;color:#555;font-weight:400;white-space:nowrap;text-align:right;transform:scaleX(0.97);transform-origin:100% 0;">23 #</div>
<svg style="position:absolute;left:0;top:0" width="622" height="432"><path d="M72.4,259.7 H77.4 L74.9,262.3Z" fill="#333"/><path d="M172.9,258.8 L175.20000000000002,256.2 L177.5,258.8Z M172.9,260.2 L175.20000000000002,262.8 L177.5,260.2Z" fill="#ccc"/><path d="M230.8,268.5 L233.10000000000002,265.9 L235.4,268.5Z M230.8,269.9 L233.10000000000002,272.5 L235.4,269.9Z" fill="#ccc"/><path d="M373,258.8 L375.3,256.2 L377.6,258.8Z M373,260.2 L375.3,262.8 L377.6,260.2Z" fill="#ccc"/><path d="M515.6,258.8 L517.9,256.2 L520.2,258.8Z M515.6,260.2 L517.9,262.8 L520.2,260.2Z" fill="#ccc"/><circle cx="571.5" cy="289.20" r="1.9" fill="none" stroke="#333" stroke-width="1.3"/><circle cx="567.6" cy="292.70" r="1.3" fill="#777"/><circle cx="571.5" cy="310.77" r="1.9" fill="none" stroke="#333" stroke-width="1.3"/><circle cx="567.6" cy="314.27" r="1.3" fill="#777"/><circle cx="571.5" cy="332.34" r="1.9" fill="none" stroke="#333" stroke-width="1.3"/><circle cx="567.6" cy="335.84" r="1.3" fill="#777"/><circle cx="571.5" cy="353.91" r="1.9" fill="none" stroke="#333" stroke-width="1.3"/><circle cx="567.6" cy="357.41" r="1.3" fill="#777"/><circle cx="571.5" cy="375.48" r="1.9" fill="none" stroke="#333" stroke-width="1.3"/><circle cx="567.6" cy="378.98" r="1.3" fill="#777"/><circle cx="571.5" cy="397.05" r="1.9" fill="none" stroke="#333" stroke-width="1.3"/><circle cx="567.6" cy="400.55" r="1.3" fill="#777"/><circle cx="571.5" cy="418.62" r="1.9" fill="none" stroke="#333" stroke-width="1.3"/><circle cx="567.6" cy="422.12" r="1.3" fill="#777"/></svg>
</body></html>
